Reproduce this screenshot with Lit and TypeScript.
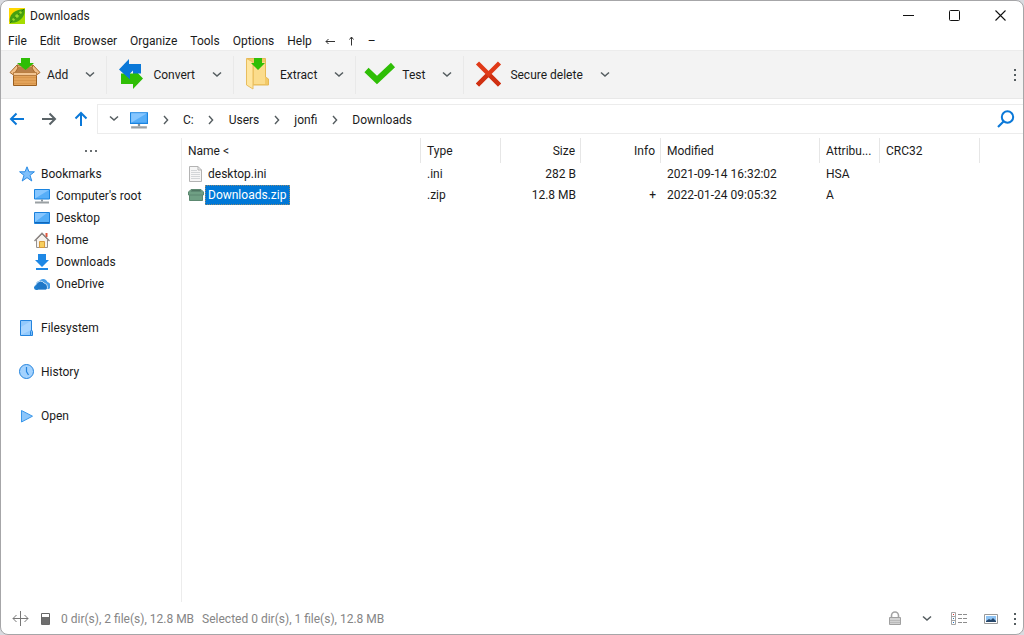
import { LitElement, html, css, svg } from "lit";
import { customElement, state } from "lit/decorators.js";

const chevronDown = html`<svg width="10" height="8" viewBox="0 0 10 8" aria-hidden="true">
  <path d="M1 1.500l4 3.600L9 1.500" fill="none" stroke="#555d60" stroke-width="1.500" /></svg>`;

const chevronRight = html`<svg width="8" height="10" viewBox="0 0 8 10" aria-hidden="true">
  <path d="M2 1l3.600 4L2 9" fill="none" stroke="#555d60" stroke-width="1.400" /></svg>`;

const dots = html`<svg width="4" height="14" viewBox="0 0 4 14" aria-hidden="true">
  <path d="M1 1h2v2H1zM1 6h2v2H1zM1 11h2v2H1z" fill="#555d60" /></svg>`;

const monitor = (size: number) => html`<svg width=${size} height=${size} viewBox="0 0 16 16" aria-hidden="true">
  <path d="M.5 1.500h15v9.500H.5z" fill="#57aef8" stroke="#1a84e0" />
  <path d="M1 10.500V2h14z" fill="#86c6ff" />
  <path d="M7 11.500h2v2H7z" fill="#8c9499" />
  <path d="M1 13.500h14v2H1z" fill="#9aa0a3" /></svg>`;

const addIcon = html`<svg width="32" height="32" viewBox="0 0 32 32" aria-hidden="true">
  <path d="M8 7h16l4 9H4z" fill="#d9a468" stroke="#9a6428" />
  <path d="M9 9h14l4 7H5z" fill="#b98049" />
  <path d="M8 7L1 14.500l3.500 2.500L9 10zM24 7l7 7.500-3.500 2.500L23 10z" fill="#f0c08c" stroke="#a86a2a" />
  <path d="M4.500 16h23v11.500h-23z" fill="#e3a35a" stroke="#9b5f20" />
  <path d="M5 19.500h22M5 22.500h22M5 25.500h22" stroke="#d8964c" />
  <path d="M4.500 14.500h23v3h-23z" fill="#f2c592" stroke="#b97f42" />
  <path d="M12 0h9v5h4l-8.500 7L8 5h4z" fill="#2fbe06" /></svg>`;

const convertIcon = html`<svg width="32" height="32" viewBox="0 0 32 32" aria-hidden="true">
  <path d="M6 15.500h12V10l10 10.500L18 31v-5H6z" fill="#2fbe06" />
  <path d="M4 11.500L14 1v5h12v9.500h-8v-3l-3 3v6z" fill="#0a78d8" />
  </svg>`;

const extractIcon = html`<svg width="32" height="32" viewBox="0 0 32 32" aria-hidden="true">
  <path d="M5 .5h18.500v18.500l3 2v6H5z" fill="#f2c968" stroke="#e6b955" />
  <path d="M12 4h11v22H12z" fill="#fbdc8c" />
  <path d="M4.500.5L11 4v27l-6.500-4z" fill="#ffe6a0" stroke="#e8bd5e" />
  <path d="M12 0h8v5h3l-7 7-7-7h3z" fill="#2fbe06" /></svg>`;

const testIcon = html`<svg width="32" height="32" viewBox="0 0 32 32" aria-hidden="true">
  <path d="M2.500 12L13 22 29 7" fill="none" stroke="#2fbe06" stroke-width="6" /></svg>`;

const deleteIcon = html`<svg width="32" height="32" viewBox="0 0 32 32" aria-hidden="true">
  <path d="M5.500 5l22 22M27.500 5l-22 22" stroke="#e03a18" stroke-width="4.400" />
  <path d="M15 17.500L5.500 27M18 17.500l9.500 9.500" stroke="#cf3012" stroke-width="4.400" /></svg>`;

const sideIcons = {
  star: html`<svg width="16" height="16" viewBox="0 0 16 16" aria-hidden="true">
    <path d="M8 .8l2 5h5.400L11 9.300l1.800 5.700L8 11.600 3.200 15 5 9.300.6 5.800H6z" fill="#7fc0fb" stroke="#2a8be4" /></svg>`,
  monitor: monitor(16),
  desktop: html`<svg width="16" height="16" viewBox="0 0 16 16" aria-hidden="true">
    <path d="M.5 2.500h15v11H.5z" fill="#55aef8" stroke="#1a80dc" />
    <path d="M1 12V3h12z" fill="#86c6ff" /><path d="M1 12.500h14" stroke="#1267b8" /></svg>`,
  home: html`<svg width="16" height="16" viewBox="0 0 16 16" aria-hidden="true">
    <path d="M11.500 1h2v4h-2z" fill="#e2543a" />
    <path d="M2.500 7.500L8 2l5.500 5.500v8h-11z" fill="#f5f2ee" stroke="#97928f" />
    <path d="M.5 9L8 1.200 15.500 9" fill="none" stroke="#8b8583" stroke-width="1.300" />
    <path d="M5.500 9.500h5v6h-5z" fill="#f7cf5e" stroke="#d79a3c" /></svg>`,
  download: html`<svg width="16" height="16" viewBox="0 0 16 16" aria-hidden="true">
    <path d="M4 0h8v6h3l-7 7-7-7h3zM2 14h12v2H2z" fill="#1f88e5" /></svg>`,
  cloud: html`<svg width="16" height="16" viewBox="0 0 16 16" aria-hidden="true">
    <path d="M2 9a4 4 0 0 1 3-4 5 5 0 0 1 8.500 1A4 4 0 0 1 15 13h-3z" fill="#4a9fe8" />
    <path d="M4 14a3.500 3.500 0 0 1-1-6.500 4 4 0 0 1 7-.5 4 4 0 0 1 3.500 4A3 3 0 0 1 12 14z" fill="#1f78c8" stroke="#fff" stroke-width=".7" />
    <path d="M0 11.500A2.800 2.800 0 0 1 3 9l1 5H2a2.500 2.500 0 0 1-2-2.500z" fill="#1f7fd0" /></svg>`,
  drive: html`<svg width="16" height="16" viewBox="0 0 16 16" aria-hidden="true">
    <path d="M1.500.5h11v15h-11z" fill="#92c9fc" stroke="#2484de" />
    <path d="M2 15V7l10-6v9z" fill="#a8d5ff" /><path d="M11.500 15.500v-4a1 1 0 0 1 2 0v4z" fill="#7dbdf8" stroke="#2484de" /></svg>`,
  clock: html`<svg width="16" height="16" viewBox="0 0 16 16" aria-hidden="true">
    <circle cx="7.500" cy="7.500" r="7" fill="#a3d2fe" stroke="#2484de" />
    <path d="M7.500 3V7.500l2 3.500" fill="none" stroke="#2484de" stroke-width="1.200" /></svg>`,
  play: html`<svg width="16" height="16" viewBox="0 0 16 16" aria-hidden="true">
    <path d="M2.500 2.500v11.500l11-5.800z" fill="#8cc6fb" stroke="#3a97ea" /></svg>`,
};

const fileIcons = {
  text: html`<svg width="16" height="16" viewBox="0 0 16 16" aria-hidden="true">
    <path d="M1.500.5H10l3.500 3.500v11.500h-12z" fill="#f6f6f6" stroke="#b3b3b3" />
    <path d="M10 .5V4h3.500" fill="none" stroke="#b3b3b3" />
    <path d="M3 4.500h6M3 6.500h9M3 8.500h9M3 10.500h9M3 12.500h9" stroke="#d3d6d8" /></svg>`,
  zip: html`<svg width="16" height="16" viewBox="0 0 16 16" aria-hidden="true">
    <path d="M3 2.500h10l2.500 2.500V8h-1v5.500h-13V8h-1V5z" fill="#6f9f84" stroke="#5c8870" />
    <path d="M4 3h8l1.500 1.500h-11z" fill="#4f7562" /><path d="M1.500 8h13" stroke="#5d8670" /></svg>`,
};

const tools = [
  { name: "Add", icon: addIcon },
  { name: "Convert", icon: convertIcon },
  { name: "Extract", icon: extractIcon },
  { name: "Test", icon: testIcon },
  { name: "Secure delete", icon: deleteIcon },
];

const menus = ["File", "Edit", "Browser", "Organize", "Tools", "Options", "Help"];
const path = ["C:", "Users", "jonfi", "Downloads"];

const bookmarks: { name: string; icon: keyof typeof sideIcons }[] = [
  { name: "Computer's root", icon: "monitor" },
  { name: "Desktop", icon: "desktop" },
  { name: "Home", icon: "home" },
  { name: "Downloads", icon: "download" },
  { name: "OneDrive", icon: "cloud" },
];

const places: { name: string; icon: keyof typeof sideIcons }[] = [
  { name: "Filesystem", icon: "drive" },
  { name: "History", icon: "clock" },
  { name: "Open", icon: "play" },
];

const files: {
  name: string; icon: keyof typeof fileIcons; type: string; size: string;
  info: string; modified: string; attributes: string;
}[] = [
  { name: "desktop.ini", icon: "text", type: ".ini", size: "282 B", info: "", modified: "2021-09-14 16:32:02", attributes: "HSA" },
  { name: "Downloads.zip", icon: "zip", type: ".zip", size: "12.8 MB", info: "+", modified: "2022-01-24 09:05:32", attributes: "A" },
];

@customElement("app-root")
export class AppRoot extends LitElement {
  @state() private selected = "Downloads.zip";

  static styles = css`
    :host {
      display: block;
      height: 100vh;
      background: #d9dbe0;
      color: #1b1b1b;
      font: 12px/16px Roboto, "Open Sans", sans-serif;
    }
    * { box-sizing: border-box; }
    button {
      display: inline-flex;
      align-items: center;
      justify-content: center;
      margin: 0;
      padding: 0;
      border: 0;
      background: none;
      color: inherit;
      font: inherit;
      white-space: nowrap;
    }
    svg { display: block; flex: none; }
    a { color: inherit; text-decoration: none; }
    .window {
      display: flex;
      flex-direction: column;
      height: 100%;
      border: 1px solid #a6a6a8;
      border-radius: 8px;
      background: #fff;
      overflow: hidden;
    }
    .title {
      display: flex;
      align-items: center;
      height: 29px;
      padding-left: 8px;
      gap: 5px;
    }
    .title h1 { flex: 1; margin: 0; font: inherit; }
    .captions { display: flex; align-self: stretch; }
    .captions button { width: 46px; }
    .menu {
      display: flex;
      align-items: center;
      height: 20px;
      padding: 2px 0 0 7px;
      gap: 13px;
    }
    .toolbar {
      display: flex;
      align-items: center;
      height: 49px;
      background: #f3f3f3;
      border-top: 1px solid #ececec;
      border-bottom: 1px solid #e8e8e8;
    }
    .tool { display: flex; height: 38px; border-right: 1px solid #e9e9e9; }
    .tool:last-of-type { border: 0; }
    .action { padding: 0 6px 0 8px; gap: 6px; }
    .action svg { margin-bottom: 2px; }
    .drop { width: 32px; }
    .more { width: 16px; height: 32px; margin-left: auto; }
    .address { display: flex; align-items: center; height: 39px; }
    .go { width: 32px; height: 29px; }
    .path {
      display: flex;
      flex: 1;
      align-items: center;
      height: 30px;
      border: 1px solid #ececec;
      border-right: 0;
    }
    .path ol { display: flex; align-items: center; flex: 1; margin: 0; padding: 2px 0 0; list-style: none; }
    .path li { display: flex; align-items: center; }
    .sep { display: flex; justify-content: center; width: 35px; }
    .find { width: 34px; }
    .main { display: flex; flex: 1; min-height: 0; }
    .side { width: 181px; padding-top: 3px; border-right: 1px solid #ececec; }
    .side ul { margin: 0; padding: 0; list-style: none; }
    .ellipsis { width: 100%; height: 22px; }
    .entry { display: flex; align-items: center; gap: 6px; height: 22px; padding-left: 18px; }
    .nested .entry { padding-left: 33px; }
    .place { margin-top: 22px; }
    .list { flex: 1; overflow: hidden; }
    table { table-layout: fixed; width: 798px; border-collapse: separate; border-spacing: 0; }
    th, td {
      padding: 0 5px 0 6px;
      text-align: left;
      font-weight: normal;
      white-space: nowrap;
      overflow: hidden;
    }
    th { height: 25px; border-right: 1px solid #e6e6e6; }
    td { height: 21px; }
    .num { text-align: right; }
    .w-name { width: 239px; }
    .w-mid { width: 80px; }
    .w-date { width: 159px; }
    .w-attr { width: 60px; }
    .w-crc { width: 100px; }
    .file { display: flex; align-items: center; gap: 1px; }
    .label { padding: 1px 3px 1px 2px; border: 1px solid transparent; }
    .label.on { background: #0078d7; color: #fff; border: 1px dotted #8f8a74; }
    .status {
      display: flex;
      align-items: center;
      height: 32px;
      padding: 1px 0 0 11px;
      color: #858585;
    }
    .status .counts { display: flex; gap: 8px; flex: 1; margin-left: 11px; }
    .layout { margin-right: 12px; }
    .icon-btn { width: 32px; height: 28px; }
    .status .more { margin: 0; }
  `;

  private entry(name: string, icon: keyof typeof sideIcons) {
    return html`<a class="entry" href="#">${sideIcons[icon]}<span>${name}</span></a>`;
  }

  private arrow(label: string, d: string, color: string) {
    return html`<button class="go" aria-label=${label}>
      <svg width="16" height="16" viewBox="0 0 16 16">
        ${svg`<path d=${d} fill="none" stroke=${color} stroke-width="2" />`}
      </svg></button>`;
  }

  render() {
    return html`<div class="window">
      <header class="title">
        <svg width="16" height="16" viewBox="0 0 16 16" aria-hidden="true">
          <path d="M0 0h16v16H0z" fill="#ffd800" />
          <path d="M16 0v16H0z" fill="#a5dc00" />
          <path d="M1 14.500C-1 8 5 1 15.500 1 17 8 10 16 1 14.500z" fill="#46a010" />
          <path d="M1 15L15 1" stroke="#2f7d0c" />
          <circle cx="4.500" cy="11.500" r="1.300" fill="#9cdb2a" /><circle cx="8" cy="8" r="1.800" fill="#9cdb2a" />
          <circle cx="11.500" cy="4.500" r="1.300" fill="#9cdb2a" />
        </svg>
        <h1>Downloads</h1>
        <div class="captions">
          <button aria-label="Minimize"><svg width="11" height="11" viewBox="0 0 11 11">
            <path d="M0 5.500h11" stroke="#111" /></svg></button>
          <button aria-label="Maximize"><svg width="11" height="11" viewBox="0 0 11 11">
            <rect x=".5" y=".5" width="10" height="10" rx="1" fill="none" stroke="#111" /></svg></button>
          <button aria-label="Close"><svg width="11" height="11" viewBox="0 0 11 11">
            <path d="M.5.5l10 10M10.500.5l-10 10" stroke="#111" stroke-width="1.100" /></svg></button>
        </div>
      </header>
      <nav class="menu" aria-label="Menu">
        ${menus.map((m) => html`<button>${m}</button>`)}
        <button aria-label="Back"><svg width="10" height="10" viewBox="0 0 10 10">
          <path d="M1 5.500h9M3.500 3L1 5.500 3.500 8" fill="none" stroke="#333" /></svg></button>
        <button aria-label="Up"><svg width="7" height="10" viewBox="0 0 7 10">
          <path d="M3.500 9.500V1M1.500 3.500l2-2.500 2 2.500" fill="none" stroke="#333" /></svg></button>
        <button>–</button>
      </nav>
      <div class="toolbar" role="toolbar">
        ${tools.map((t) => html`<div class="tool">
          <button class="action">${t.icon}<span>${t.name}</span></button>
          <button class="drop" aria-label="${t.name} options">${chevronDown}</button>
        </div>`)}
        <button class="more" aria-label="More">${dots}</button>
      </div>
      <div class="address">
        ${this.arrow("Back", "M15 8H2M7.500 2.500L2 8l5.500 5.500", "#0a78d8")}
        ${this.arrow("Forward", "M1 8h13M8.500 2.500L14 8l-5.500 5.500", "#5a6367")}
        ${this.arrow("Up", "M8 15V2M2.500 7.500L8 2l5.500 5.500", "#0a78d8")}
        <nav class="path" aria-label="Path">
          <button class="drop" aria-label="Recent paths">${chevronDown}</button>
          <ol>
            <li>${monitor(18)}</li>
            ${path.map((p) => html`<li><span class="sep">${chevronRight}</span><a href="#">${p}</a></li>`)}
          </ol>
          <button class="find" aria-label="Search"><svg width="18" height="18" viewBox="0 0 18 18">
            <circle cx="10.500" cy="7" r="5.700" fill="none" stroke="#0a78d8" stroke-width="2" />
            <path d="M6.500 11.500L1 17" stroke="#0a78d8" stroke-width="2.200" /></svg></button>
        </nav>
      </div>
      <main class="main">
        <aside class="side">
          <button class="ellipsis" aria-label="Sidebar options"><svg width="14" height="4" viewBox="0 0 14 4">
            <path d="M1 0h2v2H1zM6 0h2v2H6zM11 0h2v2h-2z" fill="#6a6f72" /></svg></button>
          <ul>
            <li>${this.entry("Bookmarks", "star")}
              <ul class="nested">${bookmarks.map((b) => html`<li>${this.entry(b.name, b.icon)}</li>`)}</ul>
            </li>
            ${places.map((p) => html`<li class="place">${this.entry(p.name, p.icon)}</li>`)}
          </ul>
        </aside>
        <section class="list">
          <table>
            <thead><tr>
              <th class="w-name">Name &lt;</th>
              <th class="w-mid">Type</th>
              <th class="w-mid num">Size</th>
              <th class="w-mid num">Info</th>
              <th class="w-date">Modified</th>
              <th class="w-attr">Attribu...</th>
              <th class="w-crc">CRC32</th>
            </tr></thead>
            <tbody>
              ${files.map((f) => html`<tr @click=${() => (this.selected = f.name)}>
                <td><div class="file">${fileIcons[f.icon]}<span
                  class=${f.name === this.selected ? "label on" : "label"}>${f.name}</span></div></td>
                <td>${f.type}</td>
                <td class="num">${f.size}</td>
                <td class="num">${f.info}</td>
                <td>${f.modified}</td>
                <td>${f.attributes}</td>
                <td></td>
              </tr>`)}
            </tbody>
          </table>
        </section>
      </main>
      <footer class="status">
        <button class="layout" aria-label="Resize columns"><svg width="17" height="17" viewBox="0 0 17 17">
          <path d="M8.500 1v15M1 8.500h15M4.500 5L1 8.500 4.500 12M12.500 5L16 8.500 12.500 12" fill="none" stroke="#777" /></svg></button>
        <svg width="9" height="12" viewBox="0 0 9 12" aria-hidden="true">
          <path d="M.5.5h8v11h-8z" fill="#fff" stroke="#666" /><path d="M1 4h7v7.500H1z" fill="#6e6e6e" /></svg>
        <div class="counts"><span>0 dir(s), 2 file(s), 12.8 MB</span><span>Selected 0 dir(s), 1 file(s), 12.8 MB</span></div>
        <button class="icon-btn" aria-label="Password"><svg width="14" height="15" viewBox="0 0 14 15">
          <path d="M3.500 7V4.500a3.500 3.500 0 0 1 7 0V7" fill="none" stroke="#a3a3a3" stroke-width="1.600" />
          <path d="M1.500 6.500h11v7h-11z" fill="#d2d2d2" stroke="#a0a0a0" /><path d="M2 9.500h10M2 11.500h10" stroke="#bababa" /></svg></button>
        <button class="icon-btn" aria-label="Password options">${chevronDown}</button>
        <button class="icon-btn" aria-label="Details view"><svg width="17" height="14" viewBox="0 0 17 14">
          <path d="M.5.500h4v12h-4zM.5 4.500h4M.5 8.500h4" fill="#fff" stroke="#a5a5a5" />
          <path d="M7 2.500h4M12 2.500h4M7 6.500h4M12 6.500h4M7 10.500h4M12 10.500h4" stroke="#8d8d8d" />
          <path d="M2 2h1v1H2z" fill="#d33" /><path d="M2 6h1v1H2z" fill="#37a" /><path d="M2 10h1v1H2z" fill="#27c" /></svg></button>
        <button class="icon-btn" aria-label="Thumbnails view"><svg width="14" height="10" viewBox="0 0 14 10">
          <path d="M.5.5h13v9H.5z" fill="#fff" stroke="#999" /><path d="M2 2h10v6H2z" fill="#8fc4f4" />
          <path d="M2 8V7l3-2 2 1 2-2 3 3v1z" fill="#27476b" /></svg></button>
        <button class="more" aria-label="More">${dots}</button>
      </footer>
    </div>`;
  }
}
